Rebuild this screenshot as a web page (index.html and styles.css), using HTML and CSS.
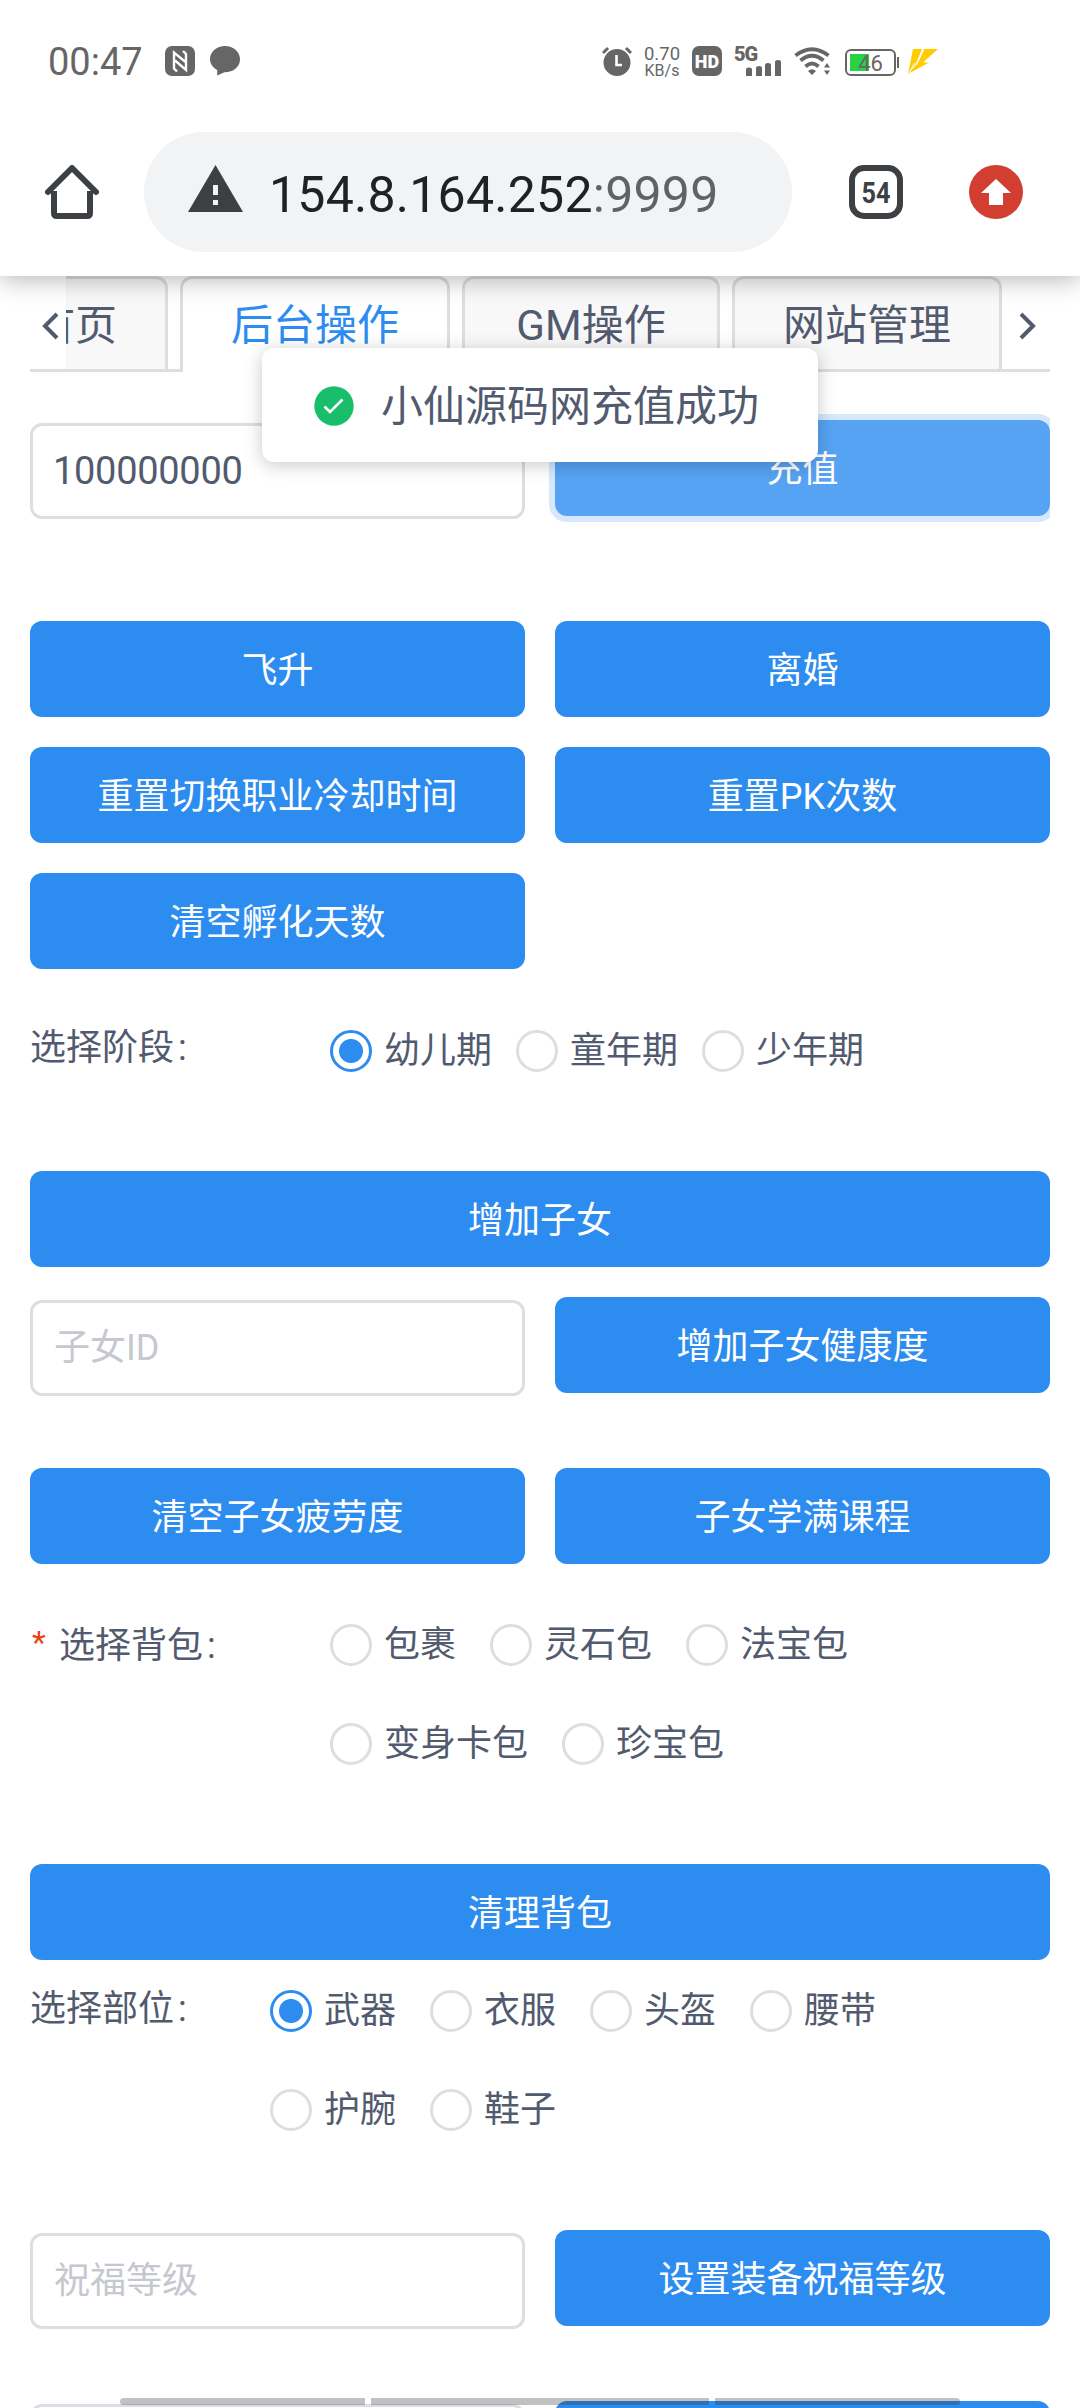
FILE: index.html
```html
<!DOCTYPE html>
<html lang="zh-CN">
<head>
    <meta charset="UTF-8">
    <meta name="viewport" content="width=device-width, initial-scale=1.0">
    <title>后台操作</title>
    <link rel="stylesheet" href="styles.css">
</head>
<body>
    <header class="browser">
        <div class="status">
            <span class="time">00:47</span>
            <svg class="nfc" width="30" height="30" viewBox="0 0 30 30">
                <rect width="30" height="30" rx="7" fill="#666"/>
                <path d="M12 25.5 9 22.5V6.5L20.5 16M18 5l3 3v16L10 14.5" fill="none" stroke="#fff" stroke-width="2.4"/>
            </svg>
            <svg class="bubble" width="30" height="30" viewBox="0 0 30 30">
                <path d="M15 0C6.700 0 0 5.800 0 13.200 0 18 3 21.500 7.200 24V29.500L14.500 26.300C23.500 26.300 30 20.500 30 13.200S23.300 0 15 0z" fill="#666"/>
            </svg>
            <div class="status-right">
                <svg class="alarm" width="30" height="30" viewBox="0 0 30 30">
                    <circle cx="15" cy="16.500" r="13.500" fill="#666"/>
                    <path d="M1 7 6 2M29 7 24 2" stroke="#666" stroke-width="3"/>
                    <path d="M14.500 9v10H20" fill="none" stroke="#fff" stroke-width="2.600"/>
                </svg>
                <div class="speed"><span>0.70</span><small>KB/s</small></div>
                <div class="hd">HD</div>
                <div class="signal">
                    <span>5G</span>
                    <svg width="48" height="30" viewBox="0 0 48 30">
                        <path d="M12 23.500q0-2 3-2t3 2V30h-6zM22 22q0-2 3-2t3 2v8h-6zM31 19q0-2 3-2t3 2v11h-6zM41 16q0-2 3-2t3 2v14h-6z" fill="#666"/>
                    </svg>
                </div>
                <svg class="wifi" width="37" height="30" viewBox="0 0 37 30">
                    <g fill="none" stroke="#666" stroke-width="3.800">
                        <path d="M1.500 9.500Q18 -3 34.500 9.500"/>
                        <path d="M6.500 14.500Q18 5 29.500 14.500"/>
                        <path d="M11.500 20.500Q18 14.500 24.500 20.500"/>
                    </g>
                    <path d="M14 25q4-3.500 8 0l-4 4z" fill="#666"/>
                    <path d="M30 21.500 33 17l3 4.500zM30 24.500h6L33 29z" fill="#666"/>
                </svg>
                <div class="battery"><span>46</span></div>
                <svg class="bolt" width="30" height="26" viewBox="0 0 30 26">
                    <path d="M5 0H14L8 14.500 0 25z" fill="#fc0"/>
                    <path d="M16 0H30L15 13.500H21L0 25 9 15z" fill="#fc0"/>
                    <path d="M1 24 6.500 14.500 8.500 15.500 15.500 1" fill="none" stroke="#fff" stroke-width="1"/>
                </svg>
            </div>
        </div>
        <div class="toolbar">
            <svg class="home" width="54" height="54" viewBox="0 0 54 54">
                <path d="M9 26V48q0 3 3 3H42q3 0 3-3V26" fill="none" stroke="#3c4043" stroke-width="6"/>
                <path d="M3 27 27 3 51 27" fill="none" stroke="#3c4043" stroke-width="6" stroke-linecap="round" stroke-linejoin="round"/>
            </svg>
            <div class="address">
                <svg width="55" height="48" viewBox="0 0 55 48">
                    <path d="M27.500 0 55 47H0z" fill="#3c4043"/>
                    <path d="M25 20h5v10h-5zM25 35h5v5h-5z" fill="#f1f3f4"/>
                </svg>
                <span class="host">154.8.164.252<span class="port">:9999</span></span>
            </div>
            <div class="tab-count"><span>54</span></div>
            <svg class="update" width="54" height="54" viewBox="0 0 54 54">
                <circle cx="27" cy="27" r="27" fill="#d23f31"/>
                <path d="M27 14 42 28H34V40H20V28H12z" fill="#fff"/>
            </svg>
        </div>
    </header>

    <main class="page">
        <nav class="tabs">
            <button class="arrow">
                <svg width="18" height="28" viewBox="0 0 18 28"><path d="M15 2 3 14 15 26"/></svg>
            </button>
            <div class="tabs-scroll">
                <div class="tab first">首页</div>
                <div class="tab active">后台操作</div>
                <div class="tab gm">GM操作</div>
                <div class="tab">网站管理</div>
            </div>
            <button class="arrow">
                <svg width="18" height="28" viewBox="0 0 18 28"><path d="M3 2 15 14 3 26"/></svg>
            </button>
        </nav>

        <div class="row charge">
            <input type="text" class="input number" value="100000000">
            <button class="btn focus">充值</button>
        </div>

        <div class="row actions">
            <button class="btn">飞升</button>
            <button class="btn">离婚</button>
            <button class="btn">重置切换职业冷却时间</button>
            <button class="btn">重置PK次数</button>
            <button class="btn">清空孵化天数</button>
        </div>

        <div class="form-item stage">
            <div class="label">选择阶段<i>:</i></div>
            <div class="radios">
                <label class="radio checked"><span></span>幼儿期</label>
                <label class="radio"><span></span>童年期</label>
                <label class="radio"><span></span>少年期</label>
            </div>
        </div>

        <button class="btn block">增加子女</button>
        <div class="row child">
            <input type="text" class="input" placeholder="子女ID">
            <button class="btn">增加子女健康度</button>
        </div>
        <div class="row">
            <button class="btn">清空子女疲劳度</button>
            <button class="btn">子女学满课程</button>
        </div>

        <div class="form-item bag">
            <div class="label"><b>*</b>选择背包<i>:</i></div>
            <div class="radios">
                <label class="radio"><span></span>包裹</label>
                <label class="radio"><span></span>灵石包</label>
                <label class="radio"><span></span>法宝包</label>
                <label class="radio"><span></span>变身卡包</label>
                <label class="radio"><span></span>珍宝包</label>
            </div>
        </div>

        <button class="btn block">清理背包</button>

        <div class="form-item part">
            <div class="label">选择部位<i>:</i></div>
            <div class="radios">
                <label class="radio checked"><span></span>武器</label>
                <label class="radio"><span></span>衣服</label>
                <label class="radio"><span></span>头盔</label>
                <label class="radio"><span></span>腰带</label>
                <label class="radio"><span></span>护腕</label>
                <label class="radio"><span></span>鞋子</label>
            </div>
        </div>

        <div class="row bless">
            <input type="text" class="input" placeholder="祝福等级">
            <button class="btn">设置装备祝福等级</button>
        </div>
        <div class="row">
            <input type="text" class="input">
            <button class="btn"></button>
        </div>
    </main>

    <div class="message">
        <svg width="40" height="40" viewBox="0 0 40 40">
            <circle cx="20" cy="20" r="19.700" fill="#19be6b"/>
            <path d="M10.500 20.500 16 26 28.500 13.500" fill="none" stroke="#fff" stroke-width="2.600"/>
        </svg>
        <span>小仙源码网充值成功</span>
    </div>

    <div class="gesture-bar"><span></span><span></span><span></span></div>
</body>
</html>
```
FILE: styles.css
```css
* {
    box-sizing: border-box;
}

body {
    margin: 0;
    width: 1080px;
    height: 2408px;
    overflow: hidden;
    position: relative;
    background: #fff;
    color: #515a6e;
    font-family: Roboto, "Noto Sans CJK SC", sans-serif;
    font-size: 36px;
}

svg {
    display: block;
    flex: none;
}

button, input {
    font-family: inherit;
    color: inherit;
}

/* browser header */
.browser {
    position: relative;
    z-index: 2;
    height: 276px;
    background: #fff;
    box-shadow: 0 3px 24px rgba(0, 0, 0, 0.3);
}

.status {
    display: flex;
    height: 132px;
    padding: 46px 142px 0 48px;
    color: #666;
}

.time {
    width: 117px;
    font-size: 38px;
    line-height: 32px;
}

.bubble {
    margin-left: 15px;
}

.status-right {
    display: flex;
    margin-left: auto;
}

.speed {
    display: flex;
    flex-direction: column;
    width: 36px;
    margin-left: 12px;
    align-items: center;
    font-size: 18.5px;
    line-height: 16px;
}

.speed small {
    font-size: 16px;
    line-height: 17px;
}

.hd {
    width: 30px;
    height: 30px;
    margin-left: 12px;
    border-radius: 7px;
    background: #666;
    color: #fff;
    font-size: 18px;
    font-weight: 900;
    line-height: 31px;
    text-align: center;
}

.signal {
    position: relative;
    width: 48px;
    margin-left: 12px;
}

.signal span {
    position: absolute;
    left: 0;
    top: 0;
    font-size: 20px;
    font-weight: 900;
    line-height: 16px;
    letter-spacing: -1px;
}

.wifi {
    margin-left: 12px;
}

.battery {
    position: relative;
    width: 51px;
    height: 27px;
    margin: 3px 0 0 14px;
    border: 2px solid #666;
    border-radius: 6px;
    background: linear-gradient(#27d345, #27d345) 3px 3px / 19px 17px no-repeat;
    font-size: 22px;
    line-height: 25px;
    text-align: center;
}

.battery::after {
    content: "";
    position: absolute;
    right: -5px;
    top: 6px;
    width: 2px;
    height: 11px;
    background: #666;
}

.bolt {
    margin: 3px 0 0 12px;
}

.toolbar {
    display: flex;
    align-items: center;
    height: 120px;
    padding-left: 45px;
}

.address {
    display: flex;
    align-items: center;
    width: 648px;
    height: 120px;
    margin-left: 45px;
    padding-left: 44px;
    border-radius: 60px;
    background: #f1f3f4;
}

.address svg {
    margin-bottom: 7px;
}

.host {
    margin: 5px 0 0 26px;
    color: #202124;
    font-size: 50px;
    letter-spacing: 0.25px;
}

.port {
    color: #5f6368;
}

.tab-count {
    width: 54px;
    height: 54px;
    margin-left: 57px;
    border: 6px solid #3c4043;
    border-radius: 15px;
    color: #3c4043;
    font-size: 30px;
    font-weight: bold;
    line-height: 43px;
    text-align: center;
}

.tab-count span {
    display: block;
    transform: scaleX(0.84);
}

.update {
    margin-left: 66px;
}

/* tabs */
.page {
    padding: 0 30px;
}

.tabs {
    display: flex;
    height: 96px;
    margin-bottom: 48px;
    background: linear-gradient(#dcdee2, #dcdee2) bottom / 100% 3px no-repeat;
}

.arrow {
    display: flex;
    align-items: center;
    justify-content: center;
    width: 36px;
    padding: 3px 0 0 5px;
    border: 0;
    background: none;
}

.arrow:last-child {
    margin-left: 2px;
}

.arrow path {
    fill: none;
    stroke: #515a6e;
    stroke-width: 4;
}

.tabs-scroll {
    display: flex;
    gap: 12px;
    width: 938px;
    overflow: hidden;
}

.tab {
    flex: none;
    width: 270px;
    height: 93px;
    border: 3px solid #dcdee2;
    border-bottom: 0;
    border-radius: 12px 12px 0 0;
    background: #f8f8f9;
    font-size: 42px;
    line-height: 93px;
    text-align: center;
}

.tab.first {
    width: 186px;
    margin-left: -84px;
}

.tab.gm {
    width: 258px;
}

.tab.active {
    height: 96px;
    background: #fff;
    color: #2d8cf0;
}

/* buttons and inputs */
.row {
    display: grid;
    grid-template-columns: 495px 495px;
    gap: 30px;
    align-items: start;
}

.btn {
    height: 96px;
    padding: 0 0 5px;
    border: 0;
    border-radius: 12px;
    background: #2d8cf0;
    color: #fff;
    font-size: 36px;
}

.btn.block {
    display: block;
    width: 100%;
}

.btn.focus {
    background: #57a3f3;
    box-shadow: 0 0 0 6px rgba(45, 140, 240, 0.2);
    clip-path: inset(-6px 0 -6px -6px);
}

.input {
    width: 495px;
    height: 96px;
    margin: 3px 0 0;
    padding: 0 21px;
    border: 3px solid #dcdee2;
    border-radius: 12px;
    background: #fff;
    font-size: 36px;
    outline: none;
}

.input.number {
    padding-left: 20px;
    font-size: 38px;
    letter-spacing: -0.3px;
}

.input::placeholder {
    color: #c5c8ce;
}

.charge {
    height: 96px;
    margin-bottom: 105px;
}

.child {
    height: 96px;
    margin: 30px 0 75px;
}

.bless {
    height: 96px;
    margin-bottom: 75px;
}

/* radio groups */
.form-item {
    display: flex;
}

.label {
    width: 300px;
    line-height: 95px;
}

.label i {
    margin-left: 4px;
    font-style: normal;
}

.label b {
    display: inline-block;
    width: 29px;
    padding-left: 2px;
    color: #ed4014;
    font-size: 32px;
    font-weight: normal;
    line-height: 32px;
    vertical-align: 5px;
}

.radios {
    display: flex;
    flex: 1;
    flex-wrap: wrap;
    column-gap: 34px;
}

.radio {
    display: flex;
    align-items: flex-start;
    height: 99px;
    line-height: 101px;
}

.radio span {
    width: 42px;
    height: 42px;
    margin: 29px 12px 0 0;
    border: 3px solid #dcdee2;
    border-radius: 50%;
}

.radio.checked span {
    border-color: #2d8cf0;
    background: radial-gradient(circle, #2d8cf0 11.5px, #fff 12.5px);
}

.stage {
    margin: 32px 0 71px;
}

.stage .radios {
    column-gap: 24px;
}

.bag {
    margin: 31px 0 71px;
}

.bag .label {
    line-height: 102px;
}

.bag .radios {
    padding-right: 180px;
}

.part {
    margin: 1px 0 71px;
}

.part .label {
    width: 240px;
    line-height: 96px;
}

.part .radios {
    padding-right: 150px;
}

/* toast */
.message {
    position: absolute;
    z-index: 3;
    left: 262px;
    top: 348px;
    display: flex;
    align-items: center;
    width: 556px;
    height: 114px;
    padding: 2px 0 0 52px;
    border-radius: 12px;
    background: #fff;
    box-shadow: 0 3px 18px rgba(0, 0, 0, 0.22);
    font-size: 42px;
}

.message span {
    margin: 0 0 8px 27px;
}

/* system navigation hint */
.gesture-bar {
    position: absolute;
    z-index: 3;
    left: 120px;
    bottom: 3px;
    display: grid;
    grid-template-columns: 245px 338px 245px;
    gap: 6px;
    width: 840px;
}

.gesture-bar span {
    height: 7px;
    background: rgba(51, 51, 51, 0.3);
}

.gesture-bar span:first-child {
    border-radius: 4px 0 0 4px;
}

.gesture-bar span:last-child {
    border-radius: 0 4px 4px 0;
}
```
